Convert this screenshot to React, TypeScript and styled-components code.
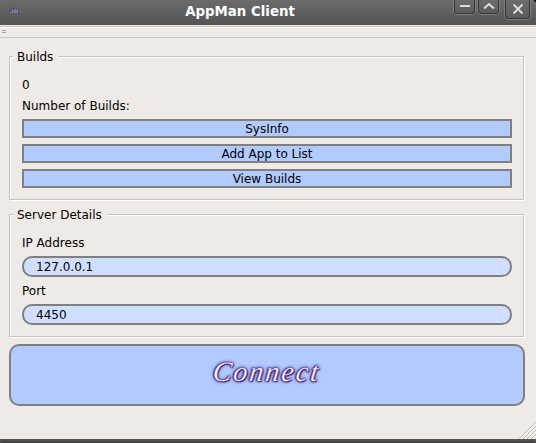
import React from "react";
import styled, { createGlobalStyle } from "styled-components";

const GlobalStyle = createGlobalStyle`
  * { box-sizing: border-box; }
  body { margin: 0; background: #000; overflow: hidden; }
  button, input { font: inherit; color: inherit; margin: 0; outline: none; }
`;

const Window = styled.div`
  display: flex;
  flex-direction: column;
  width: 536px;
  height: 443px;
  overflow: hidden;
  border-radius: 2px 5px 2px 2px;
  background: #eeebe6;
  color: #000;
  font: 12px/14px "DejaVu Sans", sans-serif;
`;

const TitleBar = styled.header`
  display: grid;
  grid-template-columns: 80px 1fr 136px;
  flex: none;
  height: 25px;
  background: linear-gradient(#6b6b6b, #545454);
`;

const AppIcon = styled.svg`
  display: block;
  margin: 6px 0 0 8px;
`;

const Title = styled.h1`
  margin: 0;
  padding-top: 4px;
  font: bold 13.33px/16px "DejaVu Sans", sans-serif;
  color: #fff;
  text-align: center;
`;

const Controls = styled.div`
  display: flex;
  justify-content: flex-end;
  padding-right: 6px;
`;

const Control = styled.button<{ $last?: boolean }>`
  flex: none;
  width: ${(p) => (p.$last ? 25 : 21)}px;
  height: ${(p) => (p.$last ? 19 : 14)}px;
  margin-left: ${(p) => (p.$last ? 6 : 3)}px;
  padding: 0;
  border: 1px solid #373737;
  border-top: 0;
  border-radius: 0 0 4px 4px;
  background: linear-gradient(#6c6c6c, #5c5c5c);
  box-shadow: 0 0 0 1px #7e7e7e;
  svg { display: block; margin: 0 auto; }
`;

const ToolBar = styled.div`
  flex: none;
  height: 13px;
  padding: 5px 0 0 2px;
  border-bottom: 1px solid #c9c6c2;
  box-shadow: inset 0 1px #eeebe6, inset 0 2px #c5c2be, inset 0 3px #fff;
`;

const Handle = styled.div`
  width: 4px;
  height: 3px;
  border: solid #aaa7a3;
  border-width: 1px 0;
`;

const Content = styled.main`
  display: flex;
  flex-direction: column;
  flex: 1;
  padding: 18px 11px 0 9px;
`;

const Group = styled.section<{ $height: number; $gap: number }>`
  display: flex;
  flex-direction: column;
  width: 515px;
  height: ${(p) => p.$height}px;
  margin-bottom: ${(p) => p.$gap}px;
  padding: 0 11px 0 12px;
  border: 1px solid #c6c4c1;
  box-shadow: 1px 1px #fff, inset 1px 1px #fff;
`;

const Legend = styled.h2`
  align-self: flex-start;
  margin: -8px 0 0 -9px;
  padding: 1px 5px 1px 4px;
  background: #eeebe6;
  font: inherit;
`;

const Label = styled.div<{ $top: number }>`
  margin-top: ${(p) => p.$top}px;
  height: 14px;
`;

const ActionList = styled.div`
  display: grid;
  gap: 6px;
  margin-top: 6px;
`;

const Action = styled.button`
  height: 19px;
  padding: 1px 0 0;
  border: 2px solid #808080;
  background: #b1cbff;
  line-height: 14px;
`;

const Field = styled.input`
  width: 490px;
  height: 21px;
  margin-top: 6px;
  padding: 0 12px;
  border: 2px solid #808080;
  border-radius: 10px;
  background: #d0dfff;
`;

const ConnectButton = styled.button`
  width: 516px;
  height: 62px;
  padding: 0 0 7px;
  border: 2px solid #808080;
  border-radius: 10px;
  background: #b1cbff;
`;

const Script = styled.span`
  display: inline-block;
  font: italic 28px/30px "Liberation Serif", serif;
  letter-spacing: 2px;
  color: #f7f2fb;
  transform: skewX(-7deg);
  -webkit-text-stroke: 0.25px #8a6cae;
  text-shadow: 0 0 1px #3b1768, 1px 1px 1px #3b1768, -1px 0 1px #4a2878,
    0 0 2px #432076, 0 0 3px #52358f, 0 0 4px #6c55a6;
`;

const Footer = styled.footer`
  flex: none;
  height: 4px;
  border-top: 2px solid #555;
  background: #444;
`;

const GripRow = styled.div`
  display: flex;
  justify-content: flex-end;
  align-items: flex-end;
  margin: auto -11px 0 0;
`;

const icons = {
  minimize: <path d="M5 6H15" strokeWidth="2" />,
  maximize: <path d="M5 8.5L10 4L15 8.5" strokeWidth="2" />,
  close: <path d="M5.5 4.5L14.5 13.5M14.5 4.5L5.5 13.5" strokeWidth="1.8" />,
};

function Glyph({ name, h }: { name: keyof typeof icons; h: number }) {
  return (
    <svg width="20" height={h} fill="none" stroke="#dedede">
      {icons[name]}
    </svg>
  );
}

export default function App() {
  return (
    <>
      <GlobalStyle />
      <Window>
        <TitleBar>
          <AppIcon width="12" height="10" fill="none">
            <path d="M1 6L5 2V7M6 2V7M6 4H8M11 4H9V7H11" stroke="#49306a" strokeWidth="1.4" opacity=".7" />
            <path d="M2 6H3M4 3L5 4V7M7 3V7M10 4H9V7H10" stroke="#c3b0d6" strokeWidth=".8" />
          </AppIcon>
          <Title>AppMan Client</Title>
          <Controls>
            <Control aria-label="Minimize"><Glyph name="minimize" h={13} /></Control>
            <Control aria-label="Maximize"><Glyph name="maximize" h={13} /></Control>
            <Control aria-label="Close" $last><Glyph name="close" h={18} /></Control>
          </Controls>
        </TitleBar>
        <ToolBar><Handle /></ToolBar>
        <Content>
          <Group $height={144} $gap={14}>
            <Legend>Builds</Legend>
            <Label $top={13}>0</Label>
            <Label $top={7}>Number of Builds:</Label>
            <ActionList>
              <Action>SysInfo</Action>
              <Action>Add App to List</Action>
              <Action>View Builds</Action>
            </ActionList>
          </Group>
          <Group $height={123} $gap={7}>
            <Legend>Server Details</Legend>
            <Label $top={13}>IP Address</Label>
            <Field defaultValue="127.0.0.1" aria-label="IP Address" />
            <Label $top={7}>Port</Label>
            <Field defaultValue="4450" aria-label="Port" />
          </Group>
          <ConnectButton><Script>Connect</Script></ConnectButton>
          <GripRow>
            <svg width="17" height="17" fill="none">
              <path d="M0 17L17 0M4 17L17 4M8 17L17 8M12 17L17 12" stroke="#b9b6b2" />
              <path d="M1.4 17L17 1.4M5.4 17L17 5.4M9.4 17L17 9.4M13.4 17L17 13.4" stroke="#fff" />
            </svg>
          </GripRow>
        </Content>
        <Footer />
      </Window>
    </>
  );
}
